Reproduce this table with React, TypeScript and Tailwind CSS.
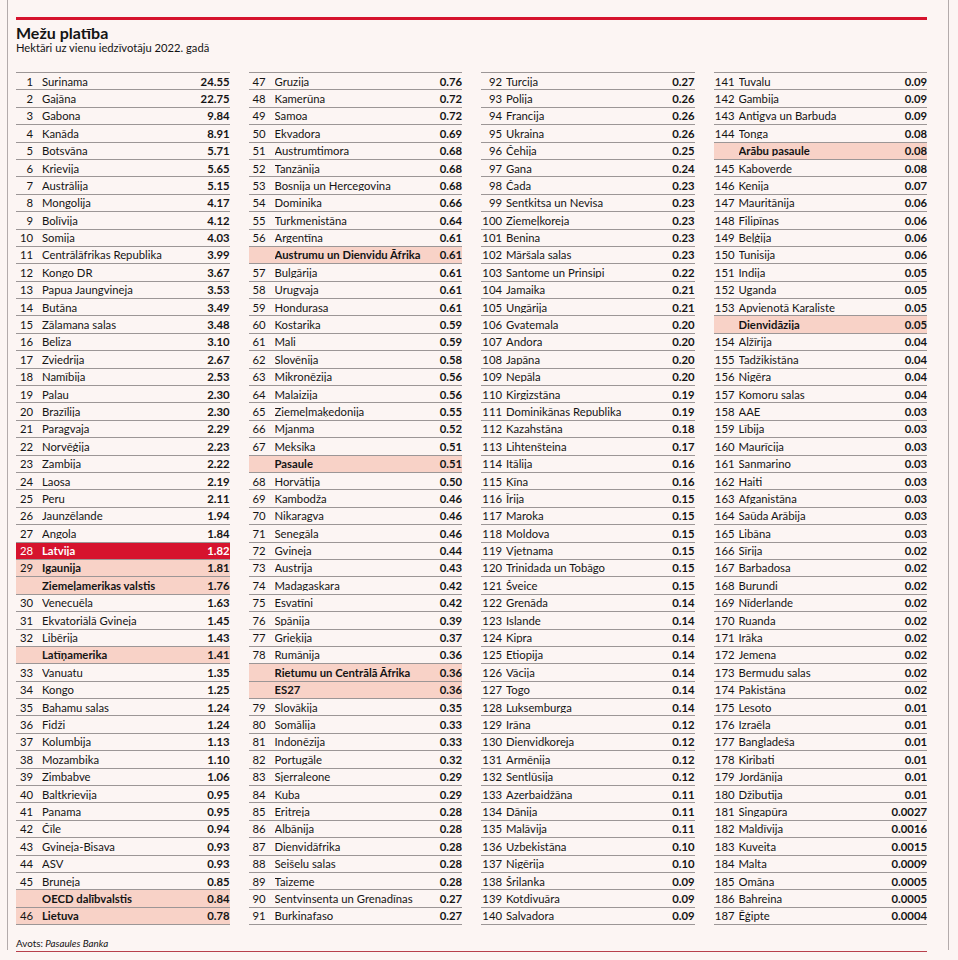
import React from "react";

type Row = { r: string; n: string; v: string; t: "n" | "r" | "p" | "a" };

const parse = (s: string): Row[] =>
  s
    .trim()
    .split("\n")
    .map((line) => {
      const [r, n, v, t] = line.trim().split("|");
      return { r, n, v, t: (t || "n") as Row["t"] };
    });

const col1 = parse(`
1|Surinama|24.55
2|Gajāna|22.75
3|Gabona|9.84
4|Kanāda|8.91
5|Botsvāna|5.71
6|Krievija|5.65
7|Austrālija|5.15
8|Mongolija|4.17
9|Bolīvija|4.12
10|Somija|4.03
11|Centrālāfrikas Republika|3.99
12|Kongo DR|3.67
13|Papua Jaungvineja|3.53
14|Butāna|3.49
15|Zālamana salas|3.48
16|Beliza|3.10
17|Zviedrija|2.67
18|Namībija|2.53
19|Palau|2.30
20|Brazīlija|2.30
21|Paragvaja|2.29
22|Norvēģija|2.23
23|Zambija|2.22
24|Laosa|2.19
25|Peru|2.11
26|Jaunzēlande|1.94
27|Angola|1.84
28|Latvija|1.82|r
29|Igaunija|1.81|p
|Ziemeļamerikas valstis|1.76|a
30|Venecuēla|1.63
31|Ekvatoriālā Gvineja|1.45
32|Libērija|1.43
|Latīņamerika|1.41|a
33|Vanuatu|1.35
34|Kongo|1.25
35|Bahamu salas|1.24
36|Fidži|1.24
37|Kolumbija|1.13
38|Mozambika|1.10
39|Zimbabve|1.06
40|Baltkrievija|0.95
41|Panama|0.95
42|Čīle|0.94
43|Gvineja-Bisava|0.93
44|ASV|0.93
45|Bruneja|0.85
|OECD dalībvalstis|0.84|a
46|Lietuva|0.78|p
`);

const col2 = parse(`
47|Gruzija|0.76
48|Kamerūna|0.72
49|Samoa|0.72
50|Ekvadora|0.69
51|Austrumtimora|0.68
52|Tanzānija|0.68
53|Bosnija un Hercegovina|0.68
54|Dominika|0.66
55|Turkmenistāna|0.64
56|Argentīna|0.61
|Austrumu un Dienvidu Āfrika|0.61|a
57|Bulgārija|0.61
58|Urugvaja|0.61
59|Hondurasa|0.61
60|Kostarika|0.59
61|Mali|0.59
62|Slovēnija|0.58
63|Mikronēzija|0.56
64|Malaizija|0.56
65|Ziemeļmaķedonija|0.55
66|Mjanma|0.52
67|Meksika|0.51
|Pasaule|0.51|a
68|Horvātija|0.50
69|Kambodža|0.46
70|Nikaragva|0.46
71|Senegāla|0.46
72|Gvineja|0.44
73|Austrija|0.43
74|Madagaskara|0.42
75|Esvatīni|0.42
76|Spānija|0.39
77|Grieķija|0.37
78|Rumānija|0.36
|Rietumu un Centrālā Āfrika|0.36|a
|ES27|0.36|a
79|Slovākija|0.35
80|Somālija|0.33
81|Indonēzija|0.33
82|Portugāle|0.32
83|Sjerraleone|0.29
84|Kuba|0.29
85|Eritreja|0.28
86|Albānija|0.28
87|Dienvidāfrika|0.28
88|Seišelu salas|0.28
89|Taizeme|0.28
90|Sentvinsenta un Grenadīnas|0.27
91|Burkinafaso|0.27
`);

const col3 = parse(`
92|Turcija|0.27
93|Polija|0.26
94|Francija|0.26
95|Ukraina|0.26
96|Čehija|0.25
97|Gana|0.24
98|Čada|0.23
99|Sentkitsa un Nevisa|0.23
100|Ziemeļkoreja|0.23
101|Benina|0.23
102|Māršala salas|0.23
103|Santome un Prinsipi|0.22
104|Jamaika|0.21
105|Ungārija|0.21
106|Gvatemala|0.20
107|Andora|0.20
108|Japāna|0.20
109|Nepāla|0.20
110|Kirgizstāna|0.19
111|Dominikānas Republika|0.19
112|Kazahstāna|0.18
113|Lihtenšteina|0.17
114|Itālija|0.16
115|Ķīna|0.16
116|Īrija|0.15
117|Maroka|0.15
118|Moldova|0.15
119|Vjetnama|0.15
120|Trinidada un Tobāgo|0.15
121|Šveice|0.15
122|Grenāda|0.14
123|Islande|0.14
124|Kipra|0.14
125|Etiopija|0.14
126|Vācija|0.14
127|Togo|0.14
128|Luksemburga|0.14
129|Irāna|0.12
130|Dienvidkoreja|0.12
131|Armēnija|0.12
132|Sentlūsija|0.12
133|Azerbaidžāna|0.11
134|Dānija|0.11
135|Malāvija|0.11
136|Uzbekistāna|0.10
137|Nigērija|0.10
138|Šrilanka|0.09
139|Kotdivuāra|0.09
140|Salvadora|0.09
`);

const col4 = parse(`
141|Tuvalu|0.09
142|Gambija|0.09
143|Antigva un Barbuda|0.09
144|Tonga|0.08
|Arābu pasaule|0.08|a
145|Kaboverde|0.08
146|Kenija|0.07
147|Mauritānija|0.06
148|Filipīnas|0.06
149|Beļģija|0.06
150|Tunisija|0.06
151|Indija|0.05
152|Uganda|0.05
153|Apvienotā Karaliste|0.05
|Dienvidāzija|0.05|a
154|Alžīrija|0.04
155|Tadžikistāna|0.04
156|Nigēra|0.04
157|Komoru salas|0.04
158|AAE|0.03
159|Lībija|0.03
160|Maurīcija|0.03
161|Sanmarino|0.03
162|Haiti|0.03
163|Afganistāna|0.03
164|Saūda Arābija|0.03
165|Libāna|0.03
166|Sīrija|0.02
167|Barbadosa|0.02
168|Burundi|0.02
169|Nīderlande|0.02
170|Ruanda|0.02
171|Irāka|0.02
172|Jemena|0.02
173|Bermudu salas|0.02
174|Pakistāna|0.02
175|Lesoto|0.01
176|Izraēla|0.01
177|Bangladeša|0.01
178|Kiribati|0.01
179|Jordānija|0.01
180|Džibutija|0.01
181|Singapūra|0.0027
182|Maldīvija|0.0016
183|Kuveita|0.0015
184|Malta|0.0009
185|Omāna|0.0005
186|Bahreina|0.0005
187|Ēģipte|0.0004
`);

function Column({ rows, wide }: { rows: Row[]; wide: boolean }) {
  return (
    <div className="flex flex-col border-t border-[#9c9696]">
      {rows.map((row, i) => {
        const bg =
          row.t === "r"
            ? "bg-[#d6132d] text-white"
            : row.t === "p" || row.t === "a"
            ? "bg-[#f8d2c7] text-[#141414]"
            : "text-[#141414]";
        const nameBold = row.t !== "n";
        return (
          <div
            key={i}
            className={`flex h-[17.4px] shrink-0 items-center border-b border-[#9c9696] ${bg}`}
          >
            <span
              className={
                wide
                  ? "w-[21px] shrink-0 text-right"
                  : "w-[17px] shrink-0 text-right"
              }
            >
              {row.r}
            </span>
            <span
              className={`${wide ? "ml-[4px]" : "ml-[9px]"} flex-1 truncate ${
                nameBold ? "font-bold" : ""
              }`}
            >
              {row.n}
            </span>
            <span className="font-bold">{row.v}</span>
          </div>
        );
      })}
    </div>
  );
}

export default function App() {
  return (
    <div
      className="h-[960px] w-[958px] overflow-hidden bg-[#fcf5f3] text-[11.3px] leading-none text-[#141414]"
      style={{ fontFamily: "Lato, 'Noto Sans', sans-serif" }}
    >
      <div className="ml-[7px] h-[950px] w-[942px] border-x border-[#b3abab] pl-[8px] pr-[21px] pt-[17px]">
        <div className="h-[3px] bg-[#d6132d]" />
        <div className="mt-[5px] text-[16px] font-bold leading-[16px]">
          Mežu platība
        </div>
        <div className="text-[11.2px] leading-[14px]">
          Hektāri uz vienu iedzīvotāju 2022. gadā
        </div>
        <div className="mt-[17px] grid grid-cols-4 gap-x-[19px]">
          <Column rows={col1} wide={false} />
          <Column rows={col2} wide={false} />
          <Column rows={col3} wide={true} />
          <Column rows={col4} wide={true} />
        </div>
        <div className="mt-[12px] text-[9.8px] leading-[12px]">
          Avots: <span className="italic">Pasaules Banka</span>
        </div>
        <div className="mt-[2px] h-px bg-[#b8404c]" />
      </div>
    </div>
  );
}
